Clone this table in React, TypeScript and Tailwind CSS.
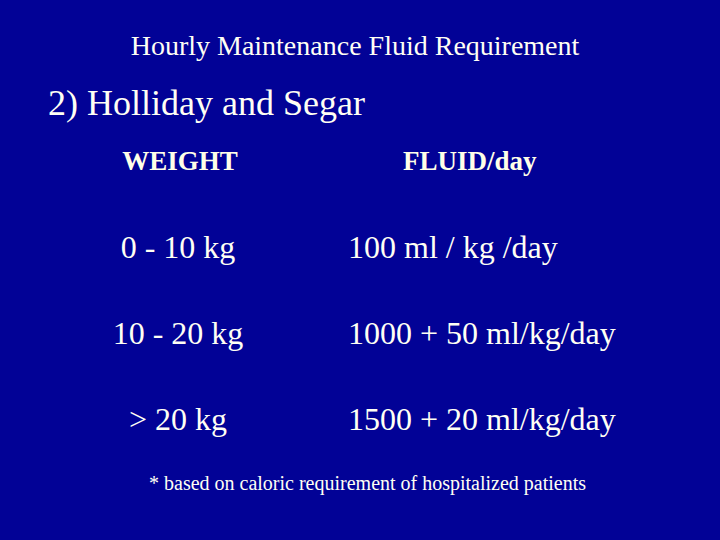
export default function App() {
  const rows = [
    { w: "0 - 10 kg", f: "100 ml / kg /day" },
    { w: "10 - 20 kg", f: "1000 + 50 ml/kg/day" },
    { w: "> 20 kg", f: "1500 + 20 ml/kg/day" },
  ];

  return (
    <div
      className="w-[720px] h-[540px] bg-[#020296] text-[#fffff4] flex flex-col overflow-hidden"
      style={{ fontFamily: '"Liberation Serif", "Times New Roman", serif' }}
    >
      <h1 className="mt-[30px] pr-[10px] text-center text-[28px] leading-[32px]">
        Hourly Maintenance Fluid Requirement
      </h1>
      <h2 className="mt-[21px] ml-[48px] text-[36px] leading-[40px]">2) Holliday and Segar</h2>

      <div className="grid grid-cols-[348px_1fr] mt-[22px] font-bold text-[27px] leading-[32px] text-[#ffffe8]">
        <div className="w-[360px] text-center">WEIGHT</div>
        <div className="pl-[55px]">FLUID/day</div>
      </div>

      <div className="flex flex-col mt-[52px] gap-[50px] text-[32px] leading-[36px]">
        {rows.map((r) => (
          <div key={r.w} className="grid grid-cols-[348px_1fr]">
            <div className="w-[356px] text-center">{r.w}</div>
            <div>{r.f}</div>
          </div>
        ))}
      </div>

      <p className="mt-[34px] ml-[149px] text-[20px] leading-[24px]">
        * based on caloric requirement of hospitalized patients
      </p>
    </div>
  );
}
